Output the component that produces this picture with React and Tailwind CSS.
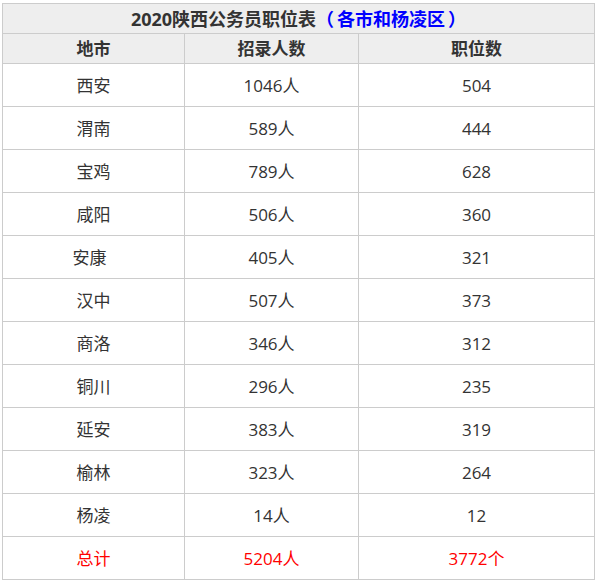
import React from 'react';

const rows = [
  ['西安', '1046人', '504'],
  ['渭南', '589人', '444'],
  ['宝鸡', '789人', '628'],
  ['咸阳', '506人', '360'],
  ['安康', '405人', '321'],
  ['汉中', '507人', '373'],
  ['商洛', '346人', '312'],
  ['铜川', '296人', '235'],
  ['延安', '383人', '319'],
  ['榆林', '323人', '264'],
  ['杨凌', '14人', '12'],
];

const App = () => {
  return (
    <div
      className="w-[597px] h-[582px] bg-white pt-[3px] pl-[2px] text-[#333]"
      style={{ fontFamily: '"Open Sans", "Noto Sans CJK SC", "Microsoft YaHei", sans-serif' }}
    >
      <table className="border-collapse w-[592px] table-fixed">
        <colgroup>
          <col className="w-[182px]" />
          <col className="w-[174px]" />
          <col className="w-[236px]" />
        </colgroup>
        <thead>
          {/* title row */}
          <tr className="bg-[#eeeeee]">
            <th colSpan={3} className="border border-[#cccccc] h-[30px] p-0 text-[18px] font-bold leading-none">
              2020陕西公务员职位表
              <span className="text-[#0000ff]">
                <span className="pr-[3px]">（</span>各市和杨凌区<span className="pl-[3px]">）</span>
              </span>
            </th>
          </tr>
          <tr className="bg-[#eeeeee]">
            <th className="border border-[#cccccc] h-[30px] p-0 text-[17px] font-bold leading-none">地市</th>
            <th className="border border-[#cccccc] h-[30px] p-0 text-[17px] font-bold leading-none">招录人数</th>
            <th className="border border-[#cccccc] h-[30px] p-0 text-[17px] font-bold leading-none">职位数</th>
          </tr>
        </thead>
        <tbody>
          {rows.map(r => (
            <tr key={r[0]}>
              <td className={'border border-[#cccccc] h-[43px] p-0 text-center text-[17px] leading-none' + (r[0] === '安康' ? ' pr-[8px]' : '')}>
                {r[0]}
              </td>
              <td className="border border-[#cccccc] h-[43px] p-0 text-center text-[17px] leading-none">{r[1]}</td>
              <td className="border border-[#cccccc] h-[43px] p-0 text-center text-[17px] leading-none">{r[2]}</td>
            </tr>
          ))}
          {/* totals */}
          <tr className="text-[#ff0000]">
            <td className="border border-[#cccccc] h-[43px] p-0 text-center text-[17px] leading-none">总计</td>
            <td className="border border-[#cccccc] h-[43px] p-0 text-center text-[17px] leading-none">5204人</td>
            <td className="border border-[#cccccc] h-[43px] p-0 text-center text-[17px] leading-none">3772个</td>
          </tr>
        </tbody>
      </table>
    </div>
  );
};

export default App;
